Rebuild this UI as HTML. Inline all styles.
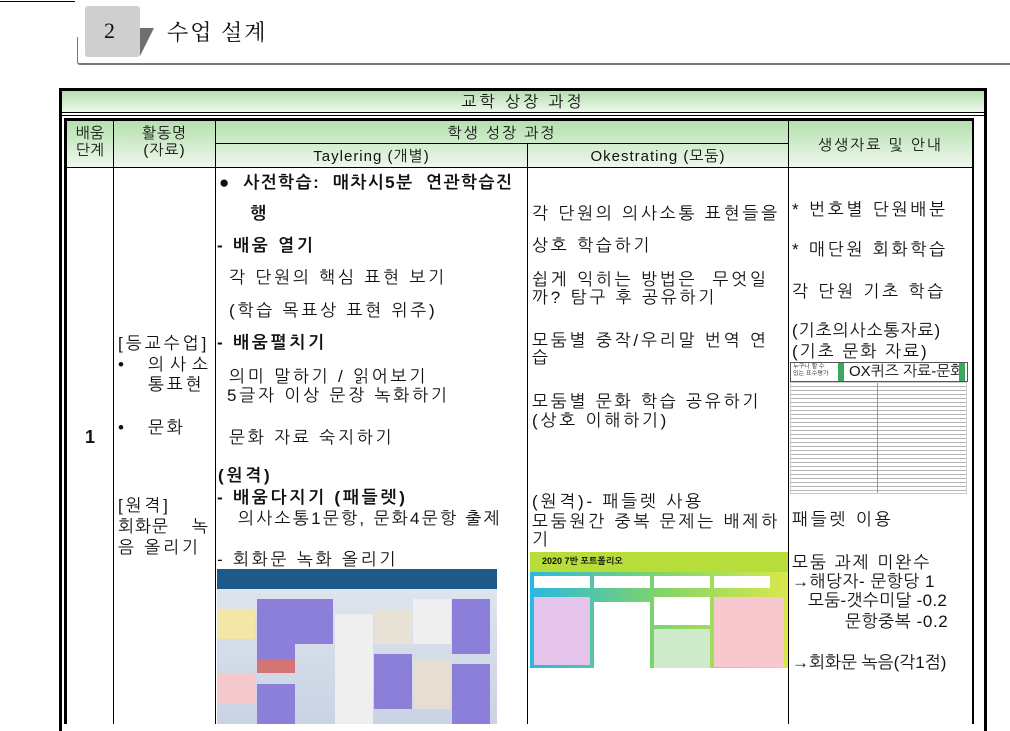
<!DOCTYPE html>
<html><head><meta charset="utf-8"><style>
body{margin:0;width:1010px;height:724px;position:relative;overflow:hidden;background:#fff;font-family:"Liberation Sans","NanumGothic","Noto Sans CJK KR",sans-serif;color:#111}
.a{position:absolute;white-space:nowrap}
.t{position:absolute;white-space:nowrap;font-size:17px;line-height:20px;letter-spacing:2.8px}
.b{font-weight:bold}
.g{background:linear-gradient(#b5dfae,#eef8ec)}
.ln{position:absolute;background:#000}
</style></head><body>
<div class="ln" style="left:0;top:1px;width:75px;height:1px"></div>
<div class="a" style="left:77px;top:37px;width:935px;height:26px;border-left:1px solid #777;border-bottom:2px solid #777;border-bottom-left-radius:3px"></div>
<div class="a" style="left:85px;top:6px;width:55px;height:51px;background:#cfcfcf;border-radius:3px"></div>
<svg class="a" style="left:138px;top:28px" width="18" height="30"><polygon points="2,0 16,0 2,28" fill="#6f6f6f"/></svg>
<div class="a" style="left:104px;top:18px;font-family:'Liberation Serif',serif;font-size:22px">2</div>
<div class="a" style="left:167px;top:16px;font-size:22px;letter-spacing:2px;font-family:'Liberation Serif','Noto Serif CJK SC',serif">수업 설계</div>

<div class="a" style="left:59px;top:88px;width:922px;height:640px;border:3px solid #000;border-bottom:none"></div>
<div class="a g" style="left:62px;top:91px;width:922px;height:21px"></div>
<div class="a" style="left:62px;top:92px;width:922px;text-align:center;font-size:16px;letter-spacing:3px">교학 상장 과정</div>
<div class="ln" style="left:62px;top:112px;width:922px;height:1px"></div>
<div class="ln" style="left:62px;top:115px;width:922px;height:1px"></div>
<div class="ln" style="left:64px;top:118px;width:910px;height:3px"></div>
<div class="ln" style="left:64px;top:118px;width:3px;height:606px"></div>
<div class="ln" style="left:972px;top:118px;width:2px;height:606px"></div>
<div class="a g" style="left:67px;top:121px;width:905px;height:46px"></div>
<div class="ln" style="left:113px;top:121px;width:1px;height:603px"></div>
<div class="ln" style="left:215px;top:121px;width:1px;height:603px"></div>
<div class="ln" style="left:527px;top:143px;width:1px;height:581px"></div>
<div class="ln" style="left:788px;top:121px;width:1px;height:603px"></div>
<div class="ln" style="left:215px;top:143px;width:573px;height:1px"></div>
<div class="ln" style="left:67px;top:167px;width:905px;height:1px"></div>
<div class="a" style="left:67px;top:125px;width:46px;text-align:center;font-size:15px;line-height:17px">배움<br>단계</div>
<div class="a" style="left:114px;top:125px;width:101px;text-align:center;font-size:15px;line-height:17px;letter-spacing:1px">활동명<br>(자료)</div>
<div class="a" style="left:216px;top:124px;width:572px;text-align:center;font-size:15px;letter-spacing:2px">학생 성장 과정</div>
<div class="a" style="left:216px;top:147px;width:311px;text-align:center;font-size:15px;letter-spacing:1px">Taylering (개별)</div>
<div class="a" style="left:528px;top:147px;width:260px;text-align:center;font-size:15px;letter-spacing:1px">Okestrating (모둠)</div>
<div class="a" style="left:789px;top:136px;width:183px;text-align:center;font-size:15px;letter-spacing:2px">생생자료 및 안내</div>

<div class="t b" style="left:85px;top:427px;font-size:18px">1</div>
<div class="t" style="left:118px;top:334px;letter-spacing:3px">[등교수업]</div>
<div class="t" style="left:118px;top:355px">•</div>
<div class="t" style="left:148px;top:355px;letter-spacing:6px">의사소</div>
<div class="t" style="left:148px;top:375px">통표현</div>
<div class="t" style="left:118px;top:418px">•</div>
<div class="t" style="left:148px;top:418px">문화</div>
<div class="t" style="left:118px;top:496px">[원격]</div>
<div class="t" style="left:118px;top:517px;letter-spacing:1px">회화문 &nbsp;&nbsp;&nbsp;녹</div>
<div class="t" style="left:118px;top:538px">음 올리기</div>

<div class="t b" style="left:219px;top:173px;letter-spacing:1.5px">●&nbsp; 사전학습: &nbsp;매차시5분 &nbsp;연관학습진</div>
<div class="t b" style="left:250px;top:204px">행</div>
<div class="t b" style="left:217px;top:236px">- 배움 열기</div>
<div class="t" style="left:229px;top:268px">각 단원의 핵심 표현 보기</div>
<div class="t" style="left:229px;top:301px">(학습 목표상 표현 위주)</div>
<div class="t b" style="left:217px;top:333px">- 배움펼치기</div>
<div class="t" style="left:229px;top:367px">의미 말하기 / 읽어보기</div>
<div class="t" style="left:227px;top:386px">5글자 이상 문장 녹화하기</div>
<div class="t" style="left:229px;top:428px">문화 자료 숙지하기</div>
<div class="t b" style="left:218px;top:466px">(원격)</div>
<div class="t b" style="left:217px;top:488px">- 배움다지기 (패들렛)</div>
<div class="t" style="left:238px;top:509px;letter-spacing:2.3px">의사소통1문항, 문화4문항 출제</div>
<div class="t" style="left:217px;top:550px">- 회화문 녹화 올리기</div>
<div class="a" style="left:217px;top:569px;width:280px;height:155px;background:linear-gradient(#1d5a8a 0,#1d5a8a 20px,#dde4ee 20px,#c9d3e3 100%)">
 <div class="a" style="left:40px;top:30px;width:38px;height:60px;background:#8b7fd9"></div>
 <div class="a" style="left:40px;top:90px;width:38px;height:14px;background:#d47474"></div>
 <div class="a" style="left:78px;top:30px;width:38px;height:45px;background:#8b7fd9"></div>
 <div class="a" style="left:0;top:40px;width:38px;height:30px;background:#f3e7a8"></div>
 <div class="a" style="left:0;top:105px;width:38px;height:30px;background:#f5c8cc"></div>
 <div class="a" style="left:40px;top:115px;width:38px;height:40px;background:#8b7fd9"></div>
 <div class="a" style="left:118px;top:45px;width:38px;height:110px;background:#efefef"></div>
 <div class="a" style="left:157px;top:40px;width:38px;height:35px;background:#e8e1d6"></div>
 <div class="a" style="left:157px;top:85px;width:38px;height:55px;background:#8b7fd9"></div>
 <div class="a" style="left:196px;top:30px;width:38px;height:45px;background:#efefef"></div>
 <div class="a" style="left:196px;top:90px;width:38px;height:50px;background:#e6ddd3"></div>
 <div class="a" style="left:235px;top:30px;width:38px;height:55px;background:#8b7fd9"></div>
 <div class="a" style="left:235px;top:95px;width:38px;height:60px;background:#8b7fd9"></div>
</div>

<div class="t" style="left:532px;top:204px">각 단원의 의사소통 표현들을</div>
<div class="t" style="left:532px;top:236px">상호 학습하기</div>
<div class="t" style="left:532px;top:270px">쉽게 익히는 방법은 &nbsp;무엇일</div>
<div class="t" style="left:532px;top:288px">까? 탐구 후 공유하기</div>
<div class="t" style="left:532px;top:331px">모둠별 중작/우리말 번역 연</div>
<div class="t" style="left:532px;top:348px">습</div>
<div class="t" style="left:532px;top:392px">모둠별 문화 학습 공유하기</div>
<div class="t" style="left:532px;top:411px">(상호 이해하기)</div>
<div class="t" style="left:532px;top:492px">(원격)- 패들렛 사용</div>
<div class="t" style="left:532px;top:512px">모둠원간 중복 문제는 배제하</div>
<div class="t" style="left:532px;top:530px">기</div>
<div class="a" style="left:530px;top:552px;width:258px;height:116px;background:linear-gradient(90deg,#2bb8e0,#7fd46a 50%,#d9e84a)">
 <div class="a" style="left:0;top:0;width:258px;height:20px;background:#b7dd3a"></div>
 <div class="a" style="left:12px;top:4px;font-size:9px;font-weight:bold">2020 7반 포트폴리오</div>
 <div class="a" style="left:4px;top:24px;width:56px;height:12px;background:#fff"></div>
 <div class="a" style="left:64px;top:24px;width:56px;height:12px;background:#fff"></div>
 <div class="a" style="left:124px;top:24px;width:56px;height:12px;background:#fff"></div>
 <div class="a" style="left:184px;top:24px;width:56px;height:12px;background:#fff"></div>
 <div class="a" style="left:4px;top:45px;width:56px;height:68px;background:#e4c4ea"></div>
 <div class="a" style="left:64px;top:50px;width:56px;height:66px;background:#fff"></div>
 <div class="a" style="left:124px;top:45px;width:56px;height:28px;background:#fff"></div>
 <div class="a" style="left:124px;top:77px;width:56px;height:39px;background:#cfeacb"></div>
 <div class="a" style="left:184px;top:45px;width:70px;height:70px;background:#f7c9cf"></div>
</div>

<div class="t" style="left:792px;top:200px">* 번호별 단원배분</div>
<div class="t" style="left:792px;top:240px">* 매단원 회화학습</div>
<div class="t" style="left:792px;top:282px">각 단원 기초 학습</div>
<div class="t" style="left:792px;top:321px;letter-spacing:1px">(기초의사소통자료)</div>
<div class="t" style="left:792px;top:342px;letter-spacing:2px">(기초 문화 자료)</div>
<div class="a" style="left:790px;top:362px;width:176px;height:18px;border:1px solid #555;background:#fff">
 <div class="a" style="left:2px;top:1px;font-size:6px;line-height:7px">누구나 할 수<br>있는 표수평가</div>
 <div class="a" style="left:47px;top:0;width:6px;height:18px;background:#3aa860"></div>
 <div class="a" style="left:58px;top:-1px;font-size:15px">OX퀴즈 자료-문화</div>
 <div class="a" style="left:168px;top:0;width:6px;height:18px;background:#3aa860"></div>
</div>
<div class="a" style="left:790px;top:382px;width:175px;height:110px;border:1px solid #ccc;background:repeating-linear-gradient(#fff 0,#fff 3px,#b5b5b5 3px,#b5b5b5 4px)">
 <div class="a" style="left:86px;top:0;width:1px;height:110px;background:#999"></div>
</div>
<div class="t" style="left:792px;top:510px">패들렛 이용</div>
<div class="t" style="left:792px;top:553px;letter-spacing:2px">모둠 과제 미완수</div>
<div class="t" style="left:792px;top:572px;letter-spacing:0.5px">→해당자- 문항당 1</div>
<div class="t" style="left:808px;top:591px;letter-spacing:0.3px">모둠-갯수미달 -0.2</div>
<div class="t" style="left:845px;top:612px;letter-spacing:0.6px">문항중복 -0.2</div>
<div class="t" style="left:792px;top:653px;letter-spacing:0">→회화문 녹음(각1점)</div>
</body></html>
